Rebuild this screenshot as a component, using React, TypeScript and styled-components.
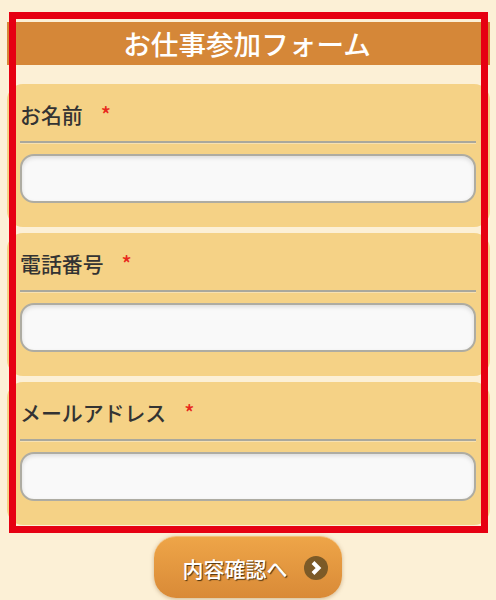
import React from "react";
import styled, { createGlobalStyle } from "styled-components";

const GlobalStyle = createGlobalStyle`
  html, body {
    margin: 0;
    padding: 0;
    background: #fcf0d6;
    font-family: "Noto Sans CJK JP", "Noto Sans", sans-serif;
  }
`;

const Page = styled.div`
  position: relative;
  width: 496px;
  height: 600px;
  overflow: hidden;
  padding: 22px 6px 0 7px;
  box-sizing: border-box;
`;

const Frame = styled.div`
  position: absolute;
  left: 9px;
  top: 12px;
  width: 479px;
  height: 521px;
  box-sizing: border-box;
  border: 7px solid #e60012;
  pointer-events: none;
`;

const Title = styled.h1`
  margin: 0 0 19px;
  padding-right: 3px;
  height: 43px;
  background: #d58738;
  color: #fff;
  font-size: 27.6px;
  font-weight: 500;
  line-height: 42px;
  text-align: center;
`;

const Section = styled.section`
  height: 143px;
  margin-bottom: 6px;
  padding: 0 14px 0 13px;
  box-sizing: border-box;
  background: #f5d286;
  border-radius: 16px;
`;

const Label = styled.div`
  display: flex;
  align-items: center;
  height: 59px;
  padding-top: 2px;
  box-sizing: border-box;
  border-bottom: 2px solid #aaa89c;
  box-shadow: 0 1px 0 rgba(255, 255, 255, 0.35);
  color: #333;
  font-size: 20.9px;
  font-weight: 500;
`;

const Required = styled.span`
  margin: 0 0 0 18px;
  color: #e8281c;
  font-size: 21px;
`;

const Input = styled.input`
  display: block;
  width: 456px;
  height: 49px;
  margin-top: 11px;
  box-sizing: border-box;
  background: #f9f9f9;
  border: 2px solid #aeaca2;
  border-radius: 14px;
  box-shadow: inset 0 2px 4px rgba(0, 0, 0, 0.12);
  outline: none;
`;

const Submit = styled.button`
  display: flex;
  align-items: center;
  justify-content: center;
  gap: 16px;
  width: 188px;
  height: 62px;
  margin: 11px auto 0 147px;
  padding: 0 0 0 14px;
  background: linear-gradient(#eea548, #d98a37);
  border: 0;
  border-top: 1px solid #f5bd75;
  border-radius: 22px;
  box-shadow: 0 1px 4px rgba(120, 70, 10, 0.35);
  color: #fff;
  font-family: inherit;
  font-size: 21px;
  font-weight: 500;
  text-shadow: 1px 1px 1px #4b3210;
`;

const fields = ["お名前", "電話番号", "メールアドレス"];

function ArrowIcon() {
  return (
    <svg width="24" height="24" viewBox="0 0 24 24">
      <circle cx="12" cy="12" r="12" fill="#7c5a27" />
      <path d="M9 6.5 L14.5 12 L9 17.5" fill="none" stroke="#fff" strokeWidth="4" />
    </svg>
  );
}

export default function App() {
  return (
    <Page>
      <GlobalStyle />
      <Title>お仕事参加フォーム</Title>
      {fields.map((name) => (
        <Section key={name}>
          <Label>
            {name}
            <Required>*</Required>
          </Label>
          <Input type="text" />
        </Section>
      ))}
      <Submit type="button">
        内容確認へ
        <ArrowIcon />
      </Submit>
      <Frame />
    </Page>
  );
}
